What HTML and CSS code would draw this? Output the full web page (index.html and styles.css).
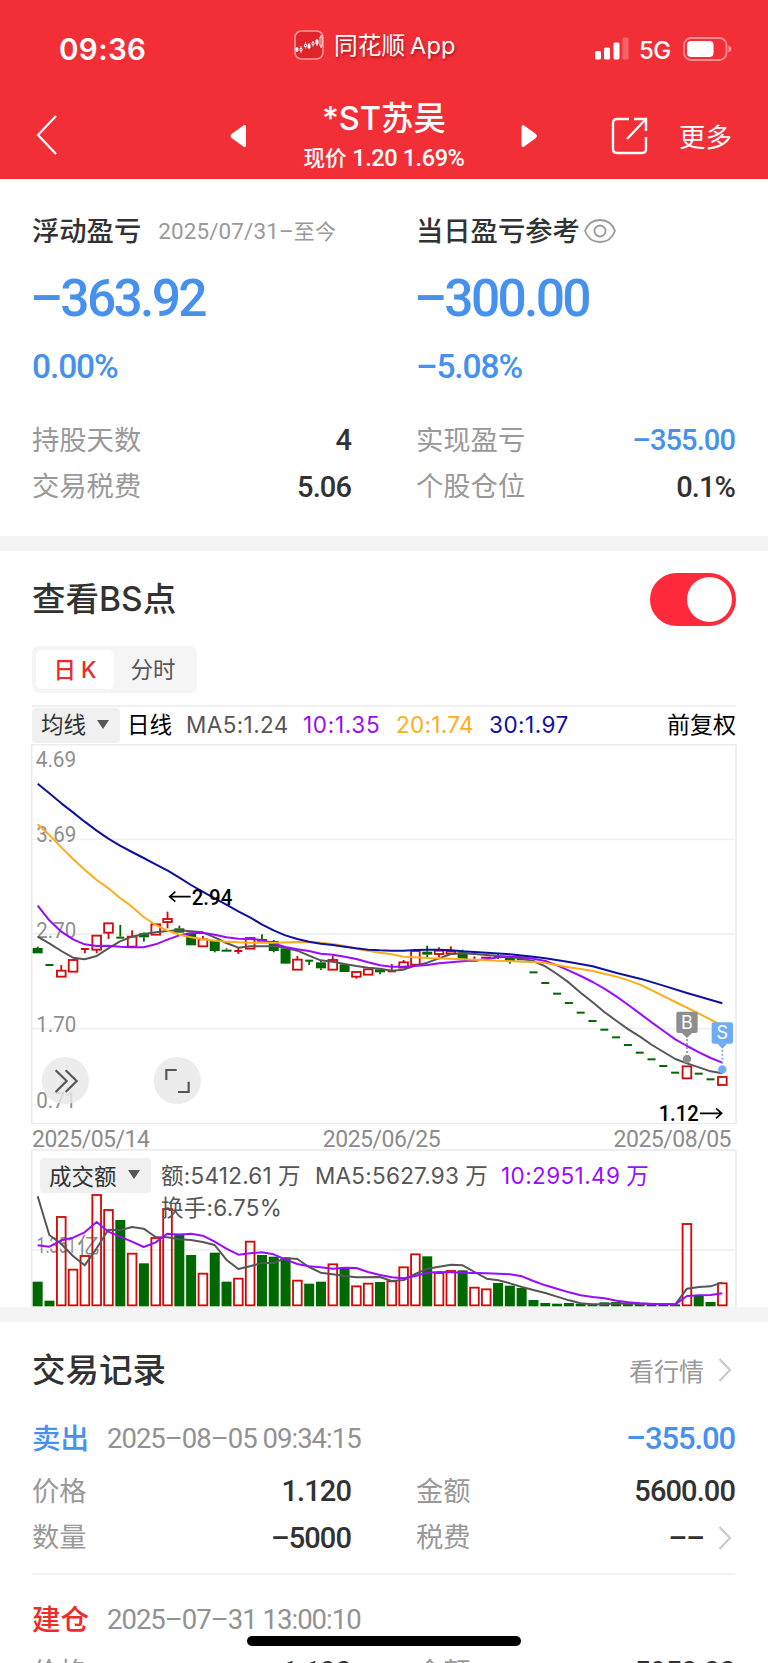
FILE: index.html
```html
<!DOCTYPE html>
<html lang="zh-CN">
<head>
<meta charset="utf-8">
<title>*ST苏吴</title>
<link rel="stylesheet" href="styles.css">
</head>
<body>
<div class="phone">
  <header class="top">
    <div class="status">
      <span class="clock">09:36</span>
      <div class="brand">
        <svg class="brand-logo" width="30" height="30" viewBox="0 0 30 30">
          <rect x="1" y="1" width="28" height="28" rx="6.500" fill="#e0242b" stroke="#fa9a9b" stroke-width="1.600"/>
          <g stroke="#fff" stroke-width=".9" fill="none">
            <path d="M3 17v5M7 16v2m0 3v2M11.500 12v2m0 3v1.500M15 13v6M19 11v1m0 3v1.500M23 9v7M27 5v2m0 9v2"/>
            <path d="M2 18h2v3H2zM14 14.500h2v3.500h-2zM22 10h2v4h-2z" fill="#fff"/>
            <path d="M6 18.500h2v2H6zM10.500 14.500h2v2h-2zM18 12.500h2v2h-2zM26 7h2v9h-2z"/>
          </g>
        </svg>
        <span class="brand-name">同花顺<i>App</i></span>
      </div>
      <div class="signals">
        <svg width="34" height="24" viewBox="0 0 34 24" fill="#fff">
          <rect x="0" y="14" width="6" height="8.500" rx="1.500"/><rect x="9" y="10.500" width="6" height="12" rx="1.500"/>
          <rect x="18.500" y="5.500" width="6" height="17" rx="1.500"/><rect x="27.500" y="0.500" width="6" height="22" rx="1.500" opacity=".25"/>
        </svg>
        <span class="net">5G</span>
        <svg width="49" height="24" viewBox="0 0 49 24">
          <rect x="1" y="1" width="42.500" height="22" rx="7" fill="none" stroke="#fff" stroke-opacity=".45" stroke-width="1.800"/>
          <rect x="4" y="4" width="26.500" height="16" rx="4" fill="#fff"/>
          <path d="M45.500 8.500q3 1.200 3 3.500t-3 3.500z" fill="#fff" opacity=".5"/>
        </svg>
      </div>
    </div>
    <nav class="nav">
      <svg class="back" width="22" height="42" viewBox="0 0 22 42"><path d="M21 2 3 21l18 19" fill="none" stroke="#fff" stroke-width="2.200"/></svg>
      <svg class="prev" width="17" height="24" viewBox="0 0 17 24"><path d="M14.500 1q1.500 0 1.500 2v18q0 2-1.500 2-1 0-2.500-1.500L1.500 14q-1.800-2 0-4L12 2.500Q13.500 1 14.500 1z" fill="#fff"/></svg>
      <div class="stock">
        <div class="stock-name">*ST苏吴</div>
        <div class="stock-price">现价 <b>1.20 1.69%</b></div>
      </div>
      <svg class="next" width="17" height="24" viewBox="0 0 17 24"><path d="M2 1Q.5 1 .5 3v18q0 2 1.500 2 1 0 2.500-1.500L15 14q1.800-2 0-4L4.500 2.500Q3 1 2 1z" fill="#fff"/></svg>
      <svg class="share" width="37" height="38" viewBox="0 0 37 38" fill="none" stroke="#fff" stroke-width="2.400"><path d="M18 2H6Q2 2 2 6v26q0 4 4 4h25q4 0 4-4V20"/><path d="M23 2h12v12M35 2 16 22"/></svg>
      <span class="more">更多</span>
    </nav>
  </header>

  <section class="summary">
    <div class="col">
      <div class="head"><h2>浮动盈亏</h2><span class="range">2025/07/31–<em>至今</em></span></div>
      <div class="big">–363.92</div>
      <div class="rate">0.00%</div>
      <div class="kv"><span>持股天数</span><b>4</b></div>
      <div class="kv"><span>交易税费</span><b>5.06</b></div>
    </div>
    <div class="col">
      <div class="head"><h2>当日盈亏参考</h2>
        <svg class="eye" width="34" height="26" viewBox="0 0 34 26" fill="none" stroke="#999" stroke-width="1.800"><path d="M2 13C5 5 11 2 17 2s12 3 15 11c-3 8-9 11-15 11S5 21 2 13z"/><circle cx="17" cy="13" r="5.500"/></svg>
      </div>
      <div class="big">–300.00</div>
      <div class="rate">–5.08%</div>
      <div class="kv"><span>实现盈亏</span><b class="blue">–355.00</b></div>
      <div class="kv"><span>个股仓位</span><b>0.1%</b></div>
    </div>
  </section>

  <section class="chart-card">
    <div class="bs"><h1>查看BS点</h1><div class="toggle"><div class="knob"></div></div></div>
    <div class="tabs"><span class="tab on">日 K</span><span class="tab">分时</span></div>
    <div class="legend">
      <span class="select">均线<i class="caret"></i></span>
      <span class="l-day">日线</span><span class="l-ma5">MA5:1.24</span><span class="l-ma10">10:1.35</span><span class="l-ma20">20:1.74</span><span class="l-ma30">30:1.97</span><span class="l-adj">前复权</span>
    </div>
    <svg class="kline" id="kline" viewBox="33 12 2118 1140"></svg>
    <div class="dates"><span>2025/05/14</span><span>2025/06/25</span><span>2025/08/05</span></div>
    <div class="volume">
      <svg class="vol" id="vol" viewBox="33 27 2118 474"></svg>
      <div class="vol-info">
        <span class="select">成交额<i class="caret"></i></span>
        <div class="vol-text">
          <div class="vol-line"><span class="v1">额:5412.61<i>万</i></span><span class="v2">MA5:5627.93<i>万</i></span><span class="v3">10:2951.49<i>万</i></span></div>
          <div class="vol-line"><span class="v1">换手:6.75%</span></div>
        </div>
      </div>
    </div>
  </section>

  <section class="records">
    <div class="rec-head"><h1>交易记录</h1><span class="link">看行情</span><svg class="chev" width="14" height="26" viewBox="0 0 14 26"><path d="M1.500 2 12 13 1.500 24" fill="none" stroke="#c8c8c8" stroke-width="2"/></svg></div>
    <div class="trade">
      <div class="trade-head"><span class="side blue">卖出</span><span class="time">2025–08–05 09:34:15</span><b class="pl blue">–355.00</b></div>
      <div class="pair"><div class="kv"><span>价格</span><b>1.120</b></div><div class="kv"><span>金额</span><b>5600.00</b></div></div>
      <div class="pair"><div class="kv"><span>数量</span><b>–5000</b></div><div class="kv"><span>税费</span><b>––</b><svg class="chev" width="14" height="26" viewBox="0 0 14 26"><path d="M1.500 2 12 13 1.500 24" fill="none" stroke="#c8c8c8" stroke-width="2"/></svg></div></div>
    </div>
    <div class="trade last">
      <div class="trade-head"><span class="side red">建仓</span><span class="time">2025–07–31 13:00:10</span></div>
      <div class="pair"><div class="kv"><span>价格</span><b>1.190</b></div><div class="kv"><span>金额</span><b>5950.00</b></div></div>
    </div>
  </section>
  <div class="home-bar"></div>
</div>
<script src="chart.js"></script>
</body>
</html>
```
FILE: styles.css
```css
* { box-sizing: border-box; margin: 0; padding: 0; }
body { background: #fff; font-family: Inter, "Noto Sans CJK SC", sans-serif; color: #323232; }
i, em { font-style: normal; }
svg { display: block; flex: none; }
h1, h2 { font-weight: 500; }
.phone { position: relative; width: 768px; height: 1663px; overflow: hidden; background: #fff; white-space: nowrap; }
.blue { color: #4691ee !important; }
.red { color: #ed2b2b; }

.top { height: 179px; background: #f22f37; color: #fff; }
.status { height: 92px; display: flex; padding-left: 59px; padding-right: 36px; }
.clock { width: 235px; padding-top: 31px; font-size: 29.500px; line-height: 36px; font-weight: 600; letter-spacing: .4px; }
.brand { display: flex; width: 301px; padding-top: 30px; }
.brand-name { margin-left: 10px; font-size: 23.700px; line-height: 32px; text-shadow: 1px 2px 3px rgba(90,0,0,.5); }
.brand-name i { margin-left: 5px; font-size: 23.500px; letter-spacing: .2px; }
.signals { display: flex; padding-top: 37px; }
.net { width: 54px; padding-left: 10px; font-size: 24px; line-height: 27px; font-weight: 500; letter-spacing: -.5px; }
.nav { height: 87px; display: flex; padding-left: 35px; }
.back { margin-top: 22px; }
.prev { margin: 32px 0 0 173px; }
.stock { width: 274px; text-align: center; padding-top: 7px; }
.stock-name { font-size: 32.500px; line-height: 39px; font-weight: 500; }
.stock-price { font-size: 21.500px; line-height: 28px; margin-top: 6px; font-weight: 500; }
.stock-price b { font: 500 23.500px/28px Roboto, sans-serif; letter-spacing: -.4px; }
.next { margin-top: 32px; }
.share { margin: 25px 0 0 73px; }
.more { margin: 25px 0 0 31px; font-size: 26.500px; line-height: 40px; }

.summary { height: 357px; display: flex; gap: 65px; padding: 28px 33px 0 32px; }
.col { width: 319px; }
.head { display: flex; height: 48px; align-items: center; }
.head h2 { font-size: 27.300px; line-height: 40px; padding-top: 1px; }
.range { margin-left: 17px; font: 400 22.500px/40px Roboto, "Noto Sans CJK SC", sans-serif; letter-spacing: .1px; color: #999; }
.range em { font-size: 21px; }
.eye { margin-left: 3px; }
.big { height: 87px; margin-left: -2px; font: 500 51.500px/88px Roboto, sans-serif; letter-spacing: -2.700px; color: #4691ee; }
.rate { height: 50px; font: 500 33.500px/49px Roboto, sans-serif; letter-spacing: -1.100px; color: #4691ee; margin-bottom: 25px; }
.kv { display: flex; height: 46.500px; align-items: center; }
.kv span { flex: 1; font-size: 27.300px; line-height: 40px; color: #999; font-weight: 400; padding-top: 1px; }
.kv b { font: 500 29px/40px Roboto, sans-serif; letter-spacing: -.9px; }

.chart-card { border-top: 15px solid #f4f4f4; height: 771px; padding: 0 31px; }
.bs { height: 95px; padding: 0 1px; display: flex; align-items: center; justify-content: space-between; }
h1 { font-size: 33.500px; line-height: 50px; }
.toggle { width: 86px; height: 53px; margin-top: 1px; border-radius: 27px; background: #ff2a39; padding: 4px 4px 4px 37px; }
.knob { width: 45px; height: 45px; border-radius: 50%; background: #fff; }
.tabs { margin: 0 0 12px 1px; width: 165px; height: 47px; border-radius: 7px; background: #f5f5f5; padding: 4px; display: flex; }
.tab { width: 78px; height: 39px; border-radius: 6px; line-height: 39px; font-size: 22.500px; text-align: center; color: #555; }
.tab.on { background: #fff; color: #ed2b2b; font-weight: 500; word-spacing: -1px; }
.legend { margin-left: 1px; height: 39px; width: 704px; border-top: 2px solid #f1f1f1; display: flex; align-items: center; font-size: 22.500px; line-height: 34px; color: #555; }
.legend > span { padding-bottom: 2px; }
.select { width: 88px; height: 35px; background: #f0f0f0; border-radius: 4px; padding-left: 9px; display: flex; align-items: center; font-size: 22.500px; color: #333; }
.caret { margin-left: 11px; border: 6px solid transparent; border-top: 9px solid #555; border-bottom: 0; }
.l-day { margin-left: 7px; width: 59px; color: #000; }
.l-ma5 { width: 117px; letter-spacing: .4px; }
.l-ma10 { width: 93px; letter-spacing: .7px; color: #9a0cff; }
.l-ma20 { width: 93px; letter-spacing: .3px; color: #ffad18; }
.l-ma30 { letter-spacing: .5px; color: #10109f; }
.l-adj { margin-left: auto; font-size: 23px; color: #000; }
.kline { width: 706px; height: 380px; }
.dates { height: 25px; display: flex; justify-content: space-between; padding: 2px 6px 0 1px; font: 400 23px/27px Roboto, sans-serif; letter-spacing: -.5px; color: #8c8c8c; }
.volume { position: relative; height: 158px; }
.vol { width: 706px; height: 158px; }
.vol-info { position: absolute; left: 9px; top: 9px; display: flex; font-size: 22.500px; color: #555; }
.vol-info .select { width: 111px; padding-bottom: 2px; }
.vol-text { margin-left: 10px; }
.vol-line { display: flex; height: 32px; line-height: 36px; letter-spacing: .25px; }
.vol-line i { margin-left: 6px; }
.v1 { width: 154px; }
.v2 { width: 186px; }
.v3 { color: #9a0cff; letter-spacing: .4px; }

.records { border-top: 15px solid #f4f4f4; padding: 0 33px 0 32px; }
.rec-head { display: flex; align-items: center; height: 96px; margin-bottom: -4px; }
.link { margin-left: auto; margin-right: 14px; font-size: 25px; color: #999; }
.rec-head .chev, .kv .chev { margin-right: 3px; }
.kv .chev { margin-left: 14px; }
.trade { height: 161px; border-bottom: 2px solid #f3f3f3; }
.trade-head { display: flex; align-items: center; height: 50px; }
.side { font-size: 28.500px; line-height: 40px; font-weight: 500; width: 75px; }
.time { font: 400 27.500px/40px Roboto, sans-serif; letter-spacing: -1px; color: #929292; }
.pl { margin-left: auto; font: 500 31px/40px Roboto, sans-serif; letter-spacing: -1.100px; }
.pair { display: flex; gap: 65px; }
.pair .kv { width: 319px; }
.trade-head + .pair { margin-top: 4px; }
.trade.last { padding-top: 20px; border: 0; }
.home-bar { position: absolute; left: 247px; top: 1636px; width: 274px; height: 10px; border-radius: 5px; background: #000; }

svg text { font-family: Roboto, "Noto Sans CJK SC", sans-serif; }
.axis { font-size: 66px; fill: #8f8f8f; }
.mark { font-size: 66px; font-weight: 500; fill: #000; }
.badge { font-family: Inter, sans-serif; font-size: 54px; fill: #fff; text-anchor: middle; }
```
FILE: chart.js
```javascript
const PITCH = 35.414, X0 = 53;
const xAt = i => X0 + PITCH * i;
const RED = '#d20a0a', GREEN = '#006800';
const MA = { gray: '#565656', purple: '#9a0cff', orange: '#ffad18', blue: '#10109f' };

// [colour, body top, body bottom, wick top, wick bottom]
const candles = [
  ['g',624,640,620],['g',672,676],['r',692,710,675],['r',660,695],['r',624,628,624,640],['r',587,629,587,640],
  ['r',550,578,550,597],['g',590,594,555],['r',590,620,571],['g',580,592,577,605],['r',553,584],['r',537,546,515,565],
  ['g',565,578,557],['g',578,616],['r',598,619,588],['g',602,633,602,637],['g',629,635,625],['r',630,634,622,642],
  ['r',594,626],['g',597,605,583],['g',603,633,600,637],['g',625,671],['r',659,689,648],['g',659,663,659,675],
  ['g',667,685,660,690],['r',660,689,648],['g',673,696],['r',696,710,696,716],['r',688,704],['g',688,697,688,703],
  ['r',691,695,672],['r',667,683,660],['r',633,674],['g',635,644,617,652],['r',632,642,622,652],['r',634,641,619],
  ['g',637,659,629],['r',659,664,649],['r',650,656],['g',647,651,641,657],['g',653,663,653,671],['g',655,661],
  ...[696,728,760,788,817,842,868,891,914,937,957,977,997].map(y => ['g', y - 2, y + 2]),
  ['r',979,1015],['g',998,1002],['g',1015,1019],['r',1011,1035]
];

const kLines = {
  gray: '53,590 88,610 124,633 159,653 194,658 230,648 265,625 300,604 336,590 371,582 407,577 442,573 478,571 513,574 548,577 584,592 619,609 655,623 690,619 725,619 761,619 796,623 832,632 867,647 902,661 938,665 974,672 1009,678 1044,683 1080,686 1115,692 1151,689 1186,677 1222,668 1257,655 1293,642 1328,640 1364,642 1400,645 1435,648 1470,650 1506,656 1540,663 1576,679 1611,702 1647,728 1682,758 1718,787 1753,816 1790,843 1825,868 1860,890 1896,915 1931,936 1966,957 2001,970 2037,982 2072,994 2107,1000',
  purple: '53,497 88,541 124,575 159,598 194,613 230,618 265,617 300,620 336,622 371,622 407,613 442,599 478,586 513,580 548,578 584,584 619,592 655,596 690,597 725,600 761,610 796,621 832,628 867,633 902,641 938,644 974,650 1009,657 1044,667 1080,676 1115,680 1151,680 1222,675 1257,670 1328,664 1400,658 1435,652 1470,650 1506,652 1540,656 1576,663 1611,676 1647,692 1682,708 1718,726 1753,746 1790,770 1825,795 1860,821 1896,848 1931,873 1966,898 2001,918 2037,937 2072,954 2107,968',
  orange: '53,253 88,285 124,322 159,357 194,389 230,420 265,445 300,474 336,500 371,531 407,555 442,572 478,584 513,592 548,598 584,602 619,605 655,607 690,608 761,608 832,606 885,607 938,612 974,618 1009,626 1044,632 1080,638 1115,643 1151,650 1222,654 1293,656 1364,659 1435,662 1506,665 1540,666 1576,669 1611,675 1647,682 1682,687 1718,693 1753,701 1790,710 1825,721 1860,734 1896,751 1966,786 2037,821 2107,857',
  blue: '53,131 88,160 124,190 159,217 194,245 230,272 265,296 300,317 336,336 371,354 407,373 442,391 478,413 513,435 548,455 584,475 619,494 655,514 690,532 725,553 761,571 796,586 832,597 867,605 902,611 938,615 974,620 1009,625 1044,629 1080,631 1115,632 1151,632 1186,630 1222,629 1257,629 1293,631 1328,634 1400,638 1470,643 1540,650 1576,655 1647,666 1718,679 1790,699 1860,716 1930,737 2001,759 2107,790'
};

const volumes = 'g425 g482 r230 r388 r347 r164 r209 g240 r340 g370 r293 r206 g281 g345 r400 g338 g425 r415 r304 g345 g350 g353 r421 g431 g425 r372 g383 r438 r430 g426 r423 r381 r342 g349 r398 r392 g391 r442 r447 g429 g437 g444 g480 g489 g491 g489 g491 g492 g487 g486 g490 g492 g493 g493 g493 r251 g468 g486 r429'.split(' ');
const vLines = {
  gray: '53,169 88,285 124,312 159,348 194,376 230,325 265,269 300,271 336,261 371,266 407,291 442,292 478,298 513,300 548,306 584,315 619,359 655,387 690,379 725,369 761,369 796,354 832,357 867,381 902,398 938,403 974,408 1009,412 1080,411 1115,423 1151,420 1186,402 1222,386 1257,380 1293,374 1328,376 1364,396 1400,416 1435,421 1470,430 1506,441 1540,450 1576,459 1611,470 1647,481 1682,490 1718,493 1753,493 1790,490 1860,491 1966,493 2001,446 2037,441 2072,439 2107,427',
  purple: '53,316 88,320 124,301 159,293 194,277 230,246 265,275 300,290 336,305 371,321 407,307 442,281 478,284 513,281 548,287 584,305 619,326 655,344 690,340 725,337 761,343 796,358 832,372 867,379 902,382 938,386 974,383 1009,384 1044,396 1080,405 1115,412 1151,415 1186,408 1222,398 1257,396 1293,397 1328,398 1400,400 1435,401 1470,403 1506,409 1540,423 1576,436 1611,446 1647,457 1682,466 1718,471 1753,475 1790,482 1825,487 1860,490 1895,492 1966,493 2001,468 2037,466 2072,465 2107,460'
};

const rect = (x, y, w, h, attrs) => `<rect x="${x}" y="${y}" width="${w}" height="${h}" ${attrs}/>`;
const rule = (x1, y1, x2, y2, stroke, w = 5.5) => `<path d="M${x1} ${y1}L${x2} ${y2}" stroke="${stroke}" stroke-width="${w}" fill="none"/>`;
const curve = (pts, stroke) => `<polyline points="${pts}" fill="none" stroke="${stroke}" stroke-width="6" stroke-linejoin="round"/>`;
const label = (s, x, y, len, cls) => `<text class="${cls}" x="${x}" y="${y}" textLength="${len}" lengthAdjust="spacingAndGlyphs">${s}</text>`;

function candle([c, top, bot, hi = top, lo = bot], i) {
  const x = xAt(i), color = c === 'r' ? RED : GREEN;
  let out = '';
  if (hi < top) out += rule(x, hi, x, top, color);
  if (lo > bot) out += rule(x, bot, x, lo, color);
  if (c === 'r' && bot - top > 6) out += rect(x - 13, top, 26, bot - top, `fill="#fff" stroke="${color}" stroke-width="5.5"`);
  else {
    const w = bot - top < 6 ? 24 : 30;
    out += rect(x - w / 2, top, w, Math.max(6, bot - top), `fill="${color}"`);
  }
  return out;
}

function badge(letter, x, y, end, color) {
  return rect(x - 32, y, 64, 64, `rx="6" fill="${color}"`) +
    `<path d="M${x - 16} ${y + 63}h32L${x} ${y + 79}z" fill="${color}"/>` +
    `<path d="M${x} ${y + 82}V${end - 12}" stroke="${color}" stroke-width="5" stroke-dasharray="6 6"/>` +
    `<circle cx="${x}" cy="${end}" r="12.500" fill="${color}"/>` +
    `<text class="badge" x="${x}" y="${y + 51}">${letter}</text>`;
}

let k = rect(35, 14, 2113, 1137, 'fill="none" stroke="#ebebeb" stroke-width="5"');
[298, 582, 866].forEach(y => k += rule(35, y, 2148, y, '#f1f1f1'));
k += label('4.69', 47, 81, 122, 'axis') + label('3.69', 49, 306, 120, 'axis') + label('2.70', 49, 593, 120, 'axis') +
     label('1.70', 49, 876, 120, 'axis') + label('0.71', 49, 1103, 120, 'axis');
k += candles.map(candle).join('');
k += Object.keys(kLines).map(n => curve(kLines[n], MA[n])).join('');
k += label('2.94', 515, 494, 122, 'mark') + '<path d="M512 470H450M466 455 449 470l17 15" fill="none" stroke="#000" stroke-width="5"/>';
k += label('1.12', 1916, 1144, 120, 'mark') + '<path d="M2040 1120h62M2088 1105l17 15-17 15" fill="none" stroke="#000" stroke-width="5"/>';
k += badge('B', 2001, 815, 957, '#8e8e8e') + badge('S', 2107, 847, 988, '#6eadf5');
k += '<g fill="#e8e8e8" fill-opacity=".82"><circle cx="136" cy="1022" r="71"/><circle cx="472" cy="1022" r="71"/></g>';
k += '<path d="M107 991l33 32-33 33M137 991l33 32-33 33M439 1020v-30h31M506 1025v31h-32" fill="none" stroke="#555" stroke-width="6.500"/>';
document.getElementById('kline').innerHTML = k;

let v = rect(35, 30, 2113, 480, 'fill="none" stroke="#ebebeb" stroke-width="5"') + rule(35, 330, 2148, 330, '#f1f1f1');
v += label('1.351', 50, 340, 118, 'axis') + label('亿', 172, 340, 68, 'axis');
v += volumes.map((s, i) => {
  const y = +s.slice(1), x = xAt(i);
  return s[0] === 'r' ? rect(x - 13, y + 1, 26, 495 - y, `fill="none" stroke="${RED}" stroke-width="5.5"`)
                      : rect(x - 15, y, 30, 499 - y, `fill="${GREEN}"`);
}).join('');
v += curve(vLines.gray, MA.gray) + curve(vLines.purple, MA.purple);
document.getElementById('vol').innerHTML = v;
```
